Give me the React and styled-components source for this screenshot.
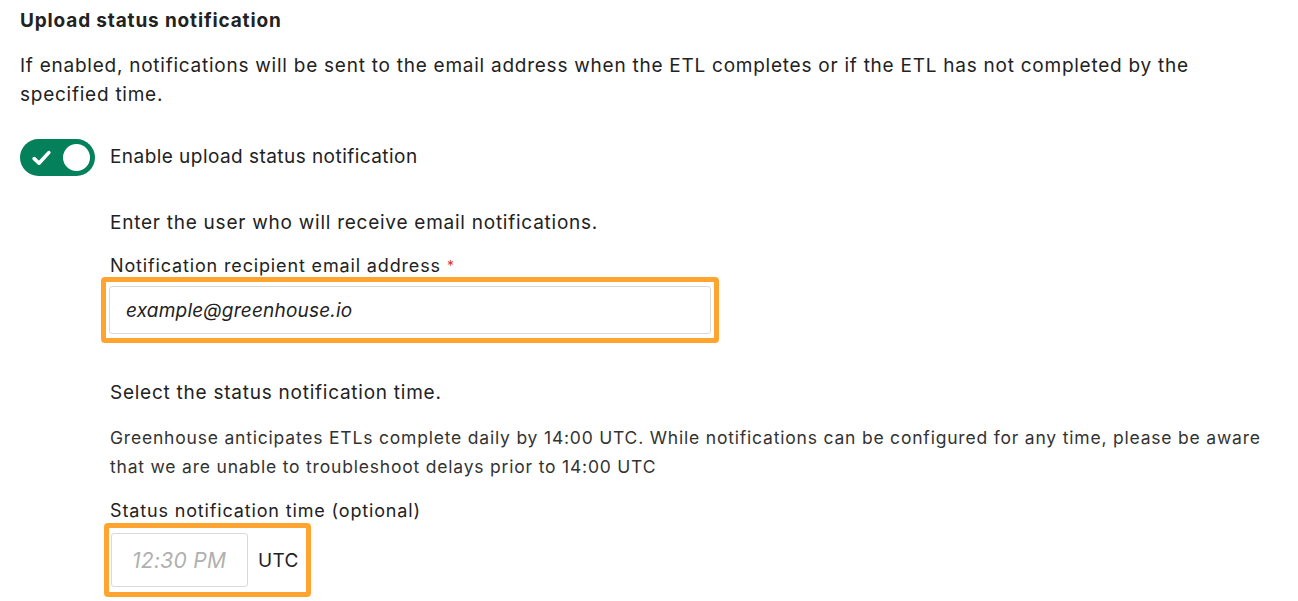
import React from 'react';
import styled, {createGlobalStyle} from 'styled-components';

const GlobalStyle = createGlobalStyle`
    body {
        margin: 0;
        background: #ffffff;
        font-family: Inter, "Noto Sans", sans-serif;
        color: #222222;
    }
`;

const Page = styled.div`
    padding: 8px 20px 0 20px;
`;

const Title = styled.h3`
    margin: 0;
    font-size: 19px;
    font-weight: 700;
    line-height: 26px;
    letter-spacing: 0.85px;
`;

const Intro = styled.p`
    margin: 17px 0 0 0;
    font-size: 19px;
    line-height: 29px;
    letter-spacing: 0.75px;
    max-width: 1200px;
`;

const ToggleRow = styled.div`
    display: flex;
    align-items: center;
    gap: 15px;
    margin-top: 30px;
`;

const Toggle = styled.button`
    width: 75px;
    height: 37px;
    border: none;
    border-radius: 19px;
    background: #04805b;
    display: flex;
    align-items: center;
    justify-content: space-between;
    padding: 0 5px 0 12px;
    cursor: pointer;
`;

const Knob = styled.span`
    width: 27px;
    height: 27px;
    border-radius: 50%;
    background: #ffffff;
`;

const ToggleLabel = styled.span`
    font-size: 19px;
    line-height: 26px;
    letter-spacing: 0.45px;
    margin-top: -1px;
`;

const Indented = styled.div`
    padding-left: 90px;
`;

const Prompt = styled.div`
    font-size: 19px;
    line-height: 26px;
    letter-spacing: 0.75px;
    margin-top: ${p => p.top}px;
`;

const FieldLabel = styled.label`
    display: block;
    font-size: 18px;
    line-height: 22px;
    letter-spacing: 0.85px;
    margin-top: ${p => p.top}px;
`;

const Required = styled.span`
    color: #d9342b;
    font-size: 14px;
    vertical-align: top;
    margin-left: 6px;
`;

const Highlight = styled.div`
    display: ${p => (p.inline ? 'inline-flex' : 'flex')};
    align-items: center;
    gap: 10px;
    width: ${p => p.width || 'auto'};
    box-sizing: border-box;
    border: 5px solid #ffa52f;
    border-radius: 4px;
    padding: ${p => p.pad};
    margin-top: ${p => p.top || 0}px;
`;

const TextInput = styled.input`
    flex: 1;
    box-sizing: border-box;
    height: 48px;
    border: 1px solid #d9d9d9;
    border-radius: 3px;
    padding: 0 16px;
    font-family: Inter, "Noto Sans", sans-serif;
    font-size: 19px;
    font-style: italic;
    letter-spacing: 0.2px;
    color: #222222;
    outline: none;
`;

const Description = styled.p`
    margin: 17px 0 0 0;
    font-size: 17.5px;
    line-height: 29px;
    letter-spacing: 0.8px;
    color: #333333;
`;

const TimeInput = styled.input`
    width: 137px;
    height: 54px;
    box-sizing: border-box;
    border: 1px solid #d9d9d9;
    border-radius: 3px;
    padding: 0 20px;
    font-family: Inter, "Noto Sans", sans-serif;
    font-size: 21px;
    font-style: italic;
    letter-spacing: 0.3px;
    outline: none;
    &::placeholder {
        color: #b0b0b0;
    }
`;

const Zone = styled.span`
    font-size: 19px;
    letter-spacing: 0.3px;
`;

function Check() {
    return (
        <svg width="19" height="16" viewBox="0 0 19 16" fill="none">
            <path d="M2.2 8.6 L7 13.2 L16.8 2.6" stroke="#ffffff" strokeWidth="3.6" strokeLinecap="round" strokeLinejoin="round" />
        </svg>
    );
}

export default function App() {
    return (
        <Page>
            <GlobalStyle />
            <Title>Upload status notification</Title>
            <Intro>
                If enabled, notifications will be sent to the email address when the ETL completes or if the ETL has not completed by the specified time.
            </Intro>
            <ToggleRow>
                <Toggle aria-label="Enable upload status notification">
                    <Check />
                    <Knob />
                </Toggle>
                <ToggleLabel>Enable upload status notification</ToggleLabel>
            </ToggleRow>
            <Indented>
                <Prompt top={34}>Enter the user who will receive email notifications.</Prompt>
                <FieldLabel top={19}>
                    Notification recipient email address<Required>*</Required>
                </FieldLabel>
                <Highlight width="618px" pad="4px 3px" top={0} style={{marginLeft: -9}}>
                    <TextInput defaultValue="example@greenhouse.io" />
                </Highlight>
                <Prompt top={37}>Select the status notification time.</Prompt>
                <Description>
                    Greenhouse anticipates ETLs complete daily by 14:00 UTC. While notifications can be configured for any time, please be aware that we are unable to troubleshoot delays prior to 14:00 UTC
                </Description>
                <FieldLabel top={19}>Status notification time (optional)</FieldLabel>
                <Highlight inline pad="5px 7px 5px 2px" top={1} style={{marginLeft: -6}}>
                    <TimeInput placeholder="12:30 PM" />
                    <Zone>UTC</Zone>
                </Highlight>
            </Indented>
        </Page>
    );
}
